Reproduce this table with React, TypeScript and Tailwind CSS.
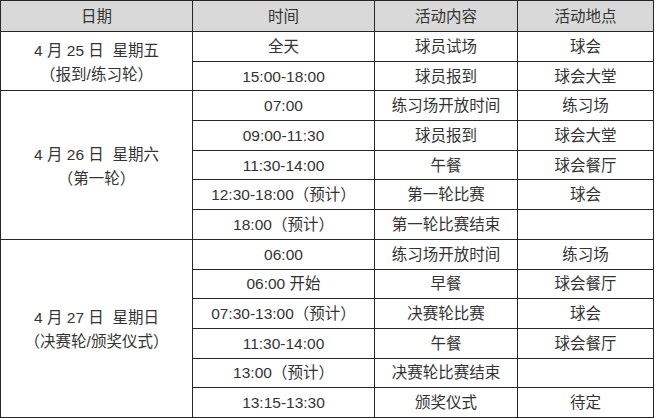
const groups = [
  {
    date: ["4 月 25 日  星期五", "（报到/练习轮）"],
    rows: [
      ["全天", "球员试场", "球会"],
      ["15:00-18:00", "球员报到", "球会大堂"],
    ],
  },
  {
    date: ["4 月 26 日  星期六", "（第一轮）"],
    rows: [
      ["07:00", "练习场开放时间", "练习场"],
      ["09:00-11:30", "球员报到", "球会大堂"],
      ["11:30-14:00", "午餐", "球会餐厅"],
      ["12:30-18:00（预计）", "第一轮比赛", "球会"],
      ["18:00（预计）", "第一轮比赛结束", ""],
    ],
  },
  {
    date: ["4 月 27 日  星期日", "（决赛轮/颁奖仪式）"],
    rows: [
      ["06:00", "练习场开放时间", "练习场"],
      ["06:00 开始", "早餐", "球会餐厅"],
      ["07:30-13:00（预计）", "决赛轮比赛", "球会"],
      ["11:30-14:00", "午餐", "球会餐厅"],
      ["13:00（预计）", "决赛轮比赛结束", ""],
      ["13:15-13:30", "颁奖仪式", "待定"],
    ],
  },
];

const cell = "border border-[#262626] text-center align-middle p-0";

export default function App() {
  return (
    <div className="w-[656px] h-[418px] bg-white overflow-hidden">
      <table
        className="table-fixed border-collapse w-[653px] text-[15.5px] text-[#333333] leading-[25px]"
        style={{ fontFamily: '"Liberation Sans", "Noto Sans CJK SC", sans-serif' }}
      >
        <colgroup>
          <col className="w-[192px]" />
          <col className="w-[182px]" />
          <col className="w-[143px]" />
          <col className="w-[136px]" />
        </colgroup>
        <thead>
          <tr className="h-[31px] bg-[#d9d9d9]">
            <th className={`${cell} font-normal`}>日期</th>
            <th className={`${cell} font-normal`}>时间</th>
            <th className={`${cell} font-normal`}>活动内容</th>
            <th className={`${cell} font-normal`}>活动地点</th>
          </tr>
        </thead>
        <tbody>
          {groups.map((g) =>
            g.rows.map((r, i) => (
              <tr key={g.date[0] + i} className="h-[29.7px]">
                {i === 0 && (
                  <td rowSpan={g.rows.length} className={`${cell} pt-[4px] leading-[24px]`}>
                    <div className="whitespace-pre">{g.date[0]}</div>
                    <div>{g.date[1]}</div>
                  </td>
                )}
                <td className={cell}>{r[0]}</td>
                <td className={cell}>{r[1]}</td>
                <td className={cell}>{r[2]}</td>
              </tr>
            ))
          )}
        </tbody>
      </table>
    </div>
  );
}
